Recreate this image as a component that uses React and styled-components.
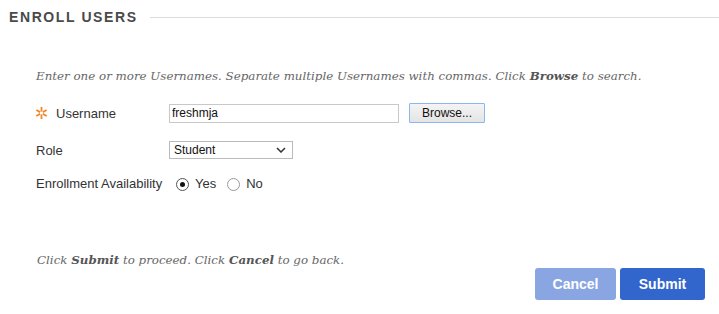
import React from "react";
import styled, { createGlobalStyle } from "styled-components";

const Global = createGlobalStyle`
  html, body { margin: 0; padding: 0; background: #fff; }
  body { font-family: "Liberation Sans", Arial, sans-serif; }
`;

const Page = styled.div`
  width: 719px;
  height: 314px;
  box-sizing: border-box;
  padding: 9px 0 0 9px;
  display: flex;
  flex-direction: column;
`;

const Header = styled.div`
  display: flex;
  align-items: center;
  height: 16px;
`;

const Title = styled.h1`
  margin: 0;
  font-size: 14px;
  font-weight: bold;
  letter-spacing: 1.6px;
  color: #4a4a4a;
  white-space: nowrap;
`;

const Rule = styled.div`
  flex: 1;
  height: 1px;
  background: #dcdcdc;
  margin-left: 12px;
`;

const Note = styled.p`
  margin: ${(p) => p.$mt}px 0 0 ${(p) => p.$ml}px;
  font-family: "DejaVu Serif", Georgia, serif;
  font-style: italic;
  font-size: 11.85px;
  line-height: 14px;
  color: #666;
  white-space: nowrap;
  b { color: #555; }
`;

const Form = styled.div`
  margin: 10px 0 0 27px;
  display: grid;
  grid-template-columns: 133px auto;
  grid-template-rows: 40px 34px 32px;
  align-items: center;
`;

const Label = styled.div`
  font-size: 13px;
  color: #333;
  display: flex;
  align-items: center;
  gap: 9px;
`;

const Field = styled.div`
  display: flex;
  align-items: center;
`;

const TextInput = styled.input`
  box-sizing: border-box;
  width: 230px;
  height: 19px;
  border: 1px solid #c8c8c8;
  padding: 0 2px;
  font-family: "Liberation Sans", Arial, sans-serif;
  font-size: 12px;
  color: #111;
  outline: none;
`;

const BrowseButton = styled.button`
  box-sizing: border-box;
  margin-left: 10px;
  height: 20px;
  width: 76px;
  border: 1px solid #8ab8ee;
  border-radius: 1px;
  background: linear-gradient(#f4f4f4, #e4e4e4);
  font-family: "Liberation Sans", Arial, sans-serif;
  font-size: 12px;
  color: #111;
  padding: 0;
`;

const SelectBox = styled.div`
  box-sizing: border-box;
  width: 124px;
  height: 18px;
  border: 1px solid #bbb;
  display: flex;
  align-items: center;
  justify-content: space-between;
  padding: 0 6px 0 4px;
  font-size: 12px;
  color: #111;
`;

const RadioLabel = styled.label`
  display: flex;
  align-items: center;
  font-size: 13px;
  color: #333;
  margin-left: ${(p) => p.$ml}px;
`;

const RadioDot = styled.span`
  box-sizing: border-box;
  width: 13px;
  height: 13px;
  border-radius: 50%;
  border: 1px solid ${(p) => (p.$on ? "#555" : "#999")};
  display: inline-flex;
  align-items: center;
  justify-content: center;
  margin-right: 6px;
  margin-top: 2px;
  &::after {
    content: "";
    width: 5px;
    height: 5px;
    border-radius: 50%;
    background: #111;
    display: ${(p) => (p.$on ? "block" : "none")};
  }
`;

const Footer = styled.div`
  margin-top: 54px;
  display: flex;
  flex-direction: column;
`;

const Actions = styled.div`
  display: flex;
  justify-content: flex-end;
  gap: 4px;
  margin: 1px 14px 0 0;
`;

const ActionButton = styled.button`
  box-sizing: border-box;
  height: 32px;
  width: ${(p) => p.$w}px;
  border: none;
  border-radius: 3px;
  background: ${(p) => (p.$primary ? "#3366cc" : "#8aa6e2")};
  color: #fff;
  font-family: "Liberation Sans", Arial, sans-serif;
  font-size: 14px;
  font-weight: bold;
`;

const Asterisk = () => (
  <svg width="11" height="12" viewBox="0 0 11 12">
    <g stroke="#f0862a" strokeWidth="1.8" strokeLinecap="butt">
      <line x1="5.5" y1="0" x2="5.5" y2="4.6" />
      <line x1="5.5" y1="7.4" x2="5.5" y2="12" />
      <line x1="0.3" y1="3" x2="4.1" y2="5.1" />
      <line x1="6.9" y1="6.9" x2="10.7" y2="9" />
      <line x1="0.3" y1="9" x2="4.1" y2="6.9" />
      <line x1="6.9" y1="5.1" x2="10.7" y2="3" />
    </g>
  </svg>
);

const Chevron = () => (
  <svg width="10" height="6" viewBox="0 0 10 6">
    <path d="M1 1 L5 5 L9 1" fill="none" stroke="#333" strokeWidth="1.5" />
  </svg>
);

export default function App() {
  return (
    <Page>
      <Global />
      <Header>
        <Title>ENROLL USERS</Title>
        <Rule />
      </Header>
      <Note $mt={44} $ml={27}>
        Enter one or more Usernames. Separate multiple Usernames with commas. Click <b>Browse</b> to search.
      </Note>
      <Form>
        <Label>
          <Asterisk />
          Username
        </Label>
        <Field>
          <TextInput defaultValue="freshmja" />
          <BrowseButton>Browse...</BrowseButton>
        </Field>
        <Label>Role</Label>
        <Field>
          <SelectBox>
            Student
            <Chevron />
          </SelectBox>
        </Field>
        <Label>Enrollment Availability</Label>
        <Field>
          <RadioLabel $ml={7}>
            <RadioDot $on />
            Yes
          </RadioLabel>
          <RadioLabel $ml={11}>
            <RadioDot />
            No
          </RadioLabel>
        </Field>
      </Form>
      <Footer>
        <Note $mt={0} $ml={28}>
          Click <b>Submit</b> to proceed. Click <b>Cancel</b> to go back.
        </Note>
        <Actions>
          <ActionButton $w={81}>Cancel</ActionButton>
          <ActionButton $w={85} $primary>Submit</ActionButton>
        </Actions>
      </Footer>
    </Page>
  );
}
